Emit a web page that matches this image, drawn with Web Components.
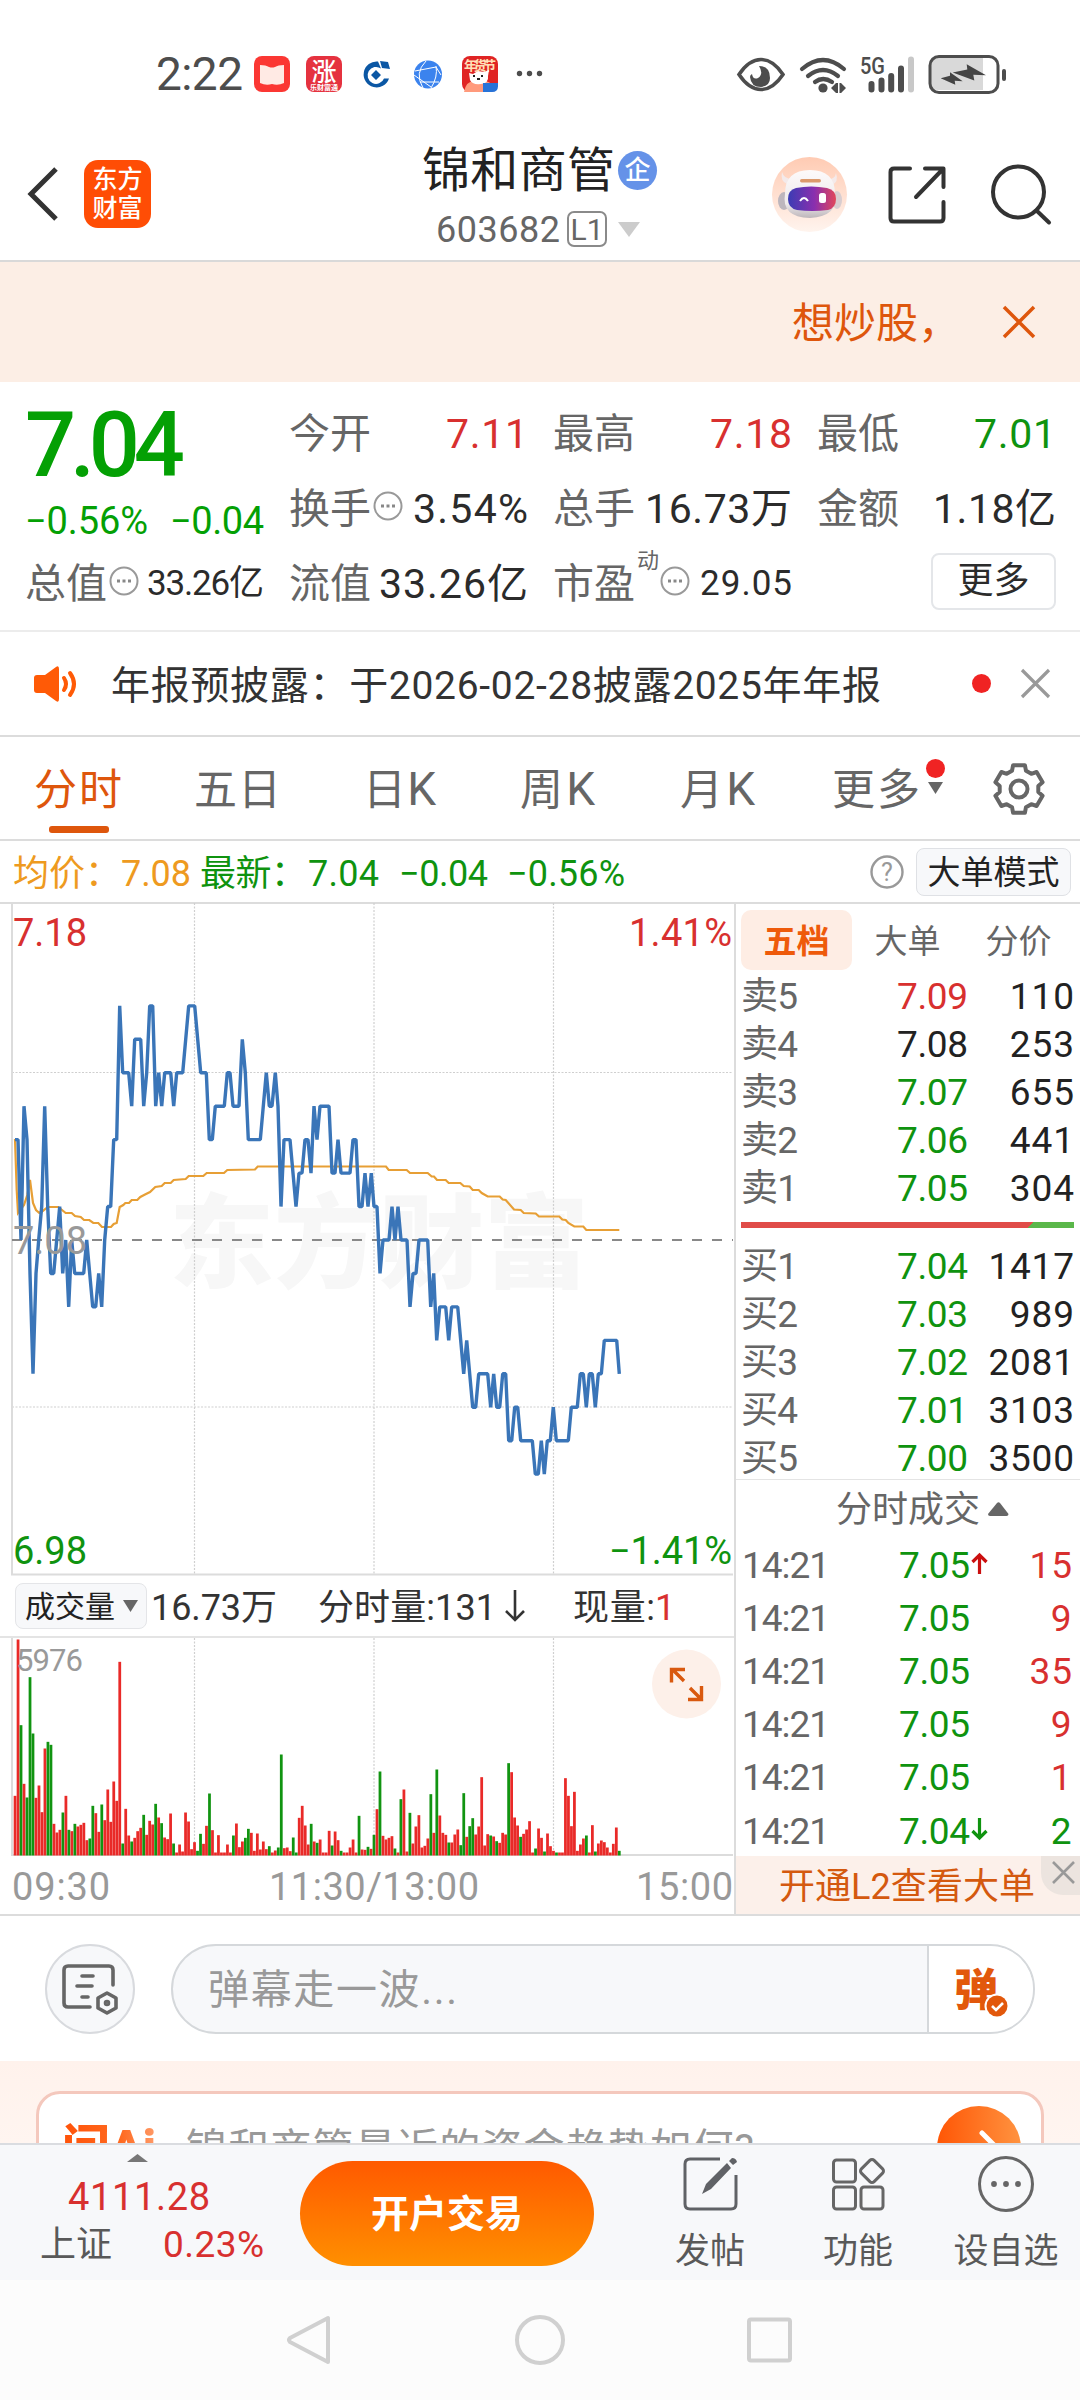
<!DOCTYPE html>
<html lang="zh-CN">
<head>
<meta charset="utf-8">
<title>锦和商管 603682</title>
<style>
    html, body { margin: 0; padding: 0; }
    body {
        width: 1080px;
        height: 2400px;
        overflow: hidden;
        background: #fff;
        color: #2b2b2b;
        font-family: Roboto, "Noto Sans CJK SC", sans-serif;
        --up: #d8302f;
        --down: #0f930f;
        --orange: #de560c;
        --grey: #666;
        --line: #dcdcdc;
    }
</style>
</head>
<body>
<stock-page>
    <status-bar></status-bar>
    <stock-header></stock-header>
    <promo-strip><fit-text w="168">想炒股，</fit-text></promo-strip>
    <quote-panel></quote-panel>
    <notice-bar><fit-text w="770">年报预披露：于2026-02-28披露2025年年报</fit-text></notice-bar>
    <period-tabs></period-tabs>
    <chart-legend></chart-legend>
    <trade-board></trade-board>
    <comment-bar></comment-bar>
    <ask-card></ask-card>
    <bottom-bar></bottom-bar>
    <system-nav></system-nav>
</stock-page>

<script>
// Registers an element whose shadow root is stamped from a template
function define(name, css, markup) {
    const tpl = document.createElement("template");
    tpl.innerHTML = `<style>svg { display: block; flex: none; overflow: visible; } ${css}</style>${markup}`;
    customElements.define(name, class extends HTMLElement {
        constructor() {
            super();
            this.attachShadow({ mode: "open" }).append(tpl.content.cloneNode(true));
        }
    });
}

define("stock-page", `
    :host { display: flex; flex-direction: column; width: 1080px; height: 2400px; overflow: hidden; }
    ::slotted(*) { flex: none; }
`, `<slot></slot>`);

// ---------- status bar ----------
define("status-bar", `
    :host { display: flex; align-items: center; height: 145px; box-sizing: border-box; padding: 2px 73px 0 156px; color: #4d4d4d; }
    .time { font-size: 46px; line-height: 54px; --drop: 0; }
    .apps { margin-left: 11px; }
    .sys { margin-left: auto; }
`, `
    <fit-text class="time" w="87">2:22</fit-text>
    <svg class="apps" width="290" height="36" viewBox="0 0 290 36">
        <rect width="36" height="36" rx="8" fill="#fb3733"/>
        <path d="M6 9q6 0 9 2 3 1 6 0 3-2 9-2v18q-6 3-12 1-6 2-12-1z" fill="#ffeae4"/>
        <rect x="52" width="36" height="36" rx="8" fill="#e5323f"/>
        <text x="70" y="25" font-size="25" font-weight="500" fill="#fff" text-anchor="middle">涨</text>
        <text x="70" y="34" font-size="7" font-weight="700" fill="#fff" text-anchor="middle">乐财富通</text>
        <path d="M124 5.500a13 13 0 1 0 11 17l-5 0a8.500 8.500 0 1 1-3-10z" fill="#0b57a4"/>
        <path d="M126 5l8 1 2 7-8-1zM122 14l5 5-5 5-5-5z" fill="#0b57a4"/>
        <circle cx="174" cy="18.500" r="14" fill="#3b83ee"/>
        <path d="M172 5q-12 12-3 27M161 15l21-4 5 8M166 26l19 0M182 10q2 11-5 22M160 19l17 12" fill="none" stroke="#fff" stroke-width="1"/>
        <rect x="208" width="36" height="36" rx="8" fill="#e02424"/>
        <text x="226" y="14" font-size="13" font-weight="700" fill="#ffe0b8" text-anchor="middle" textLength="32">年货节</text>
        <path d="M210 36q2-12 12-11l10 0q8 2 7 11z" fill="#ff9a7c"/>
        <path d="M215 17l4 1 5-3 6 1 5-2-1 6q1 7-7 8-9 1-11-4z" fill="#fff"/>
        <path d="M219 20h2M227 20h2M223 23h3" stroke="#222" stroke-width="2"/>
        <path d="M229 27h15v3q0 6-6 6h-9z" fill="#2773d8"/>
        <circle cx="265.500" cy="17.500" r="2.700" fill="#4d4d4d"/>
        <circle cx="275.500" cy="17.500" r="2.700" fill="#4d4d4d"/>
        <circle cx="285.500" cy="17.500" r="2.700" fill="#4d4d4d"/>
    </svg>
    <svg class="sys" width="270" height="40" viewBox="0 0 270 40">
        <path d="M2 20.500Q12 5.500 24 5.500T46 20.500Q36 35.500 24 35.500T2 20.500z" fill="none" stroke="#4d4d4d" stroke-width="3.600"/>
        <path d="M22 12q11 0 11 12 0 8-9 9-10 0-11-10 0-2 2-3 1 6 6 4 6-4 1-12z" fill="#4d4d4d"/>
        <g fill="none" stroke="#4d4d4d" stroke-width="4.200" stroke-linecap="round">
            <path d="M65 15q21-18 42 0M71 22q15-12 30 0M78 28q8-6 17 0"/>
        </g>
        <circle cx="86" cy="34" r="4.600" fill="#4d4d4d"/>
        <path d="M94 34l5-5v10zM109 34l-5 5v-10zM99 29h2v10h-2zM102.500 29h2v10h-2z" fill="#4d4d4d"/>
        <text x="123" y="20" font-size="23" font-weight="500" fill="#4d4d4d" textLength="25" lengthAdjust="spacingAndGlyphs">5G</text>
        <g stroke="#4d4d4d" stroke-width="6" stroke-linecap="round">
            <path d="M134.500 30v5.500M144.500 26.500v9M154.200 22v13.500M164 14.500v21"/>
            <path d="M174 5.500v30" stroke="#c8c8c8"/>
        </g>
        <path d="M201 4h45v32h-45q-9 0-9-9V13q0-9 9-9z" fill="#d9d9d9"/>
        <rect x="193" y="2.500" width="68" height="36" rx="9" fill="none" stroke="#4d4d4d" stroke-width="3"/>
        <rect x="265" y="15" width="4" height="12" rx="2" fill="#4d4d4d"/>
        <path d="M215.700 18.500L230.300 15.500 229.700 10.200 249 21.200 236.300 20.800 237.300 26.500zM203.700 24.200L213 21.800V18.300L225.700 27.200 217.700 26.800 218.300 30.700z" fill="#444"/>
    </svg>
`);

// ---------- title bar ----------
define("stock-header", `
    :host { display: flex; align-items: flex-start; height: 117px; box-sizing: border-box; border-bottom: 2px solid #d9d9d9; }
    .back { margin: 22px 0 0 27px; }
    .logo {
        width: 67px; height: 68px; margin: 15px 0 0 26px; border-radius: 14px; background: #ff4d05; color: #fff;
        font-size: 25px; font-weight: 500; line-height: 29px; text-align: center; box-sizing: border-box; padding-top: 5px;
    }
    .title { margin-left: 271px; width: 241px; }
    .name { display: flex; align-items: center; height: 50px; font-size: 48px; line-height: 50px; color: #222; --drop: 1px; }
    .tag {
        width: 39px; height: 39px; margin-left: 3px; border-radius: 50%; background: #6592e8; color: #fff;
        font-size: 26px; font-weight: 500; line-height: 38px; text-align: center;
    }
    .code { display: flex; align-items: center; height: 38px; margin: 15px 0 0 14px; font-size: 36px; line-height: 38px; color: var(--grey); --drop: 1px; }
    .level {
        width: 36px; height: 32px; margin: 0 11px 0 7px; border: 2px solid #8a8a8a; border-radius: 7px;
        font-size: 30px; line-height: 34px; text-align: center;
    }
    .robot { margin: 12px 0 0 109px; }
    .share { margin: 21px 0 0 41px; }
    .find { margin: 19px 0 0 45px; }
`, `
    <svg class="back" width="31" height="54" viewBox="0 0 31 54"><path d="M29 2L4 27l25 25" fill="none" stroke="#333" stroke-width="5"/></svg>
    <div class="logo">东方<br>财富</div>
    <div class="title">
        <div class="name"><fit-text w="193">锦和商管</fit-text><span class="tag">企</span></div>
        <div class="code"><fit-text w="124">603682</fit-text><span class="level">L1</span>
            <svg width="22" height="15" viewBox="0 0 22 15"><path d="M0 0h22L11 15z" fill="#ccc"/></svg></div>
    </div>
    <svg class="robot" width="75" height="75" viewBox="0 0 75 75">
        <defs>
            <linearGradient id="sky" x2="0" y2="1"><stop stop-color="#ffcbb3"/><stop offset="1" stop-color="#fff4ee"/></linearGradient>
            <linearGradient id="shell" x2="0" y2="1"><stop stop-color="#fdfafa"/><stop offset=".7" stop-color="#eeeaec"/><stop offset="1" stop-color="#bdb6ba"/></linearGradient>
            <linearGradient id="visor"><stop stop-color="#3b3cb4"/><stop offset=".55" stop-color="#8a2fae"/><stop offset="1" stop-color="#e2475a"/></linearGradient>
        </defs>
        <circle cx="37.500" cy="37.500" r="37.500" fill="url(#sky)"/>
        <path d="M10 15q-2 9 5 12l5-5q-8 0-10-7zM64 16q3 9-4 12l-5-6q8 1 9-6z" fill="#f4eaea"/>
        <ellipse cx="12" cy="44" rx="6" ry="9" fill="#bdb6bd"/>
        <ellipse cx="65" cy="43" rx="5" ry="9" fill="#d8cdd0"/>
        <path d="M13 37q0-24 25-24t25 24q4 22-25 24-29-1-25-24z" fill="url(#shell)"/>
        <rect x="28" y="22" width="21" height="3.500" rx="1.700" fill="#dc9a6c"/>
        <path d="M24 31q15-3 31 0 9 2 9 11t-8 11q-16 2-31 0-9-2-9-11t8-11z" fill="url(#visor)"/>
        <path d="M28 44q4-6 8 0" fill="none" stroke="#fff" stroke-width="2"/>
        <rect x="47" y="36" width="7" height="10" rx="2.500" fill="#fff"/>
    </svg>
    <svg class="share" width="58" height="58" viewBox="0 0 58 58" fill="none" stroke="#333" stroke-width="4" stroke-linecap="round" stroke-linejoin="round">
        <path d="M22 2.500H6Q2.500 2.500 2.500 6v46q0 3.500 3.500 3.500h46q3.500 0 3.500-3.500V36M37 2.500h18.500V21M54 4L28 31"/>
    </svg>
    <svg class="find" width="60" height="60" viewBox="0 0 60 60" fill="none" stroke="#333" stroke-width="4" stroke-linecap="round">
        <circle cx="27.500" cy="28" r="25.500"/><path d="M45.500 46.500L58 58.500"/>
    </svg>
`);

define("promo-strip", `
    :host {
        display: flex; align-items: center; justify-content: flex-end; height: 120px; box-sizing: border-box; padding-right: 45px;
        background: #fceee5; color: var(--orange); font-size: 42px; line-height: 60px;
    }
    svg { margin-left: 43px; }
`, `
    <slot></slot>
    <svg width="32" height="32" viewBox="0 0 32 32"><path d="M1 1l30 30M31 1L1 31" stroke="#de560c" stroke-width="3.500"/></svg>
`);

// ---------- quote ----------
define("info-dot", `:host { display: block; }`, `
    <svg width="30" height="30" viewBox="0 0 30 30">
        <circle cx="15" cy="15" r="13.500" fill="none" stroke="#999" stroke-width="2"/>
        <path d="M8 15h3M13.500 15h3M19 15h3" stroke="#888" stroke-width="3"/>
    </svg>
`);

define("quote-item", `
    :host { display: flex; align-items: center; height: 75px; font-size: 41px; line-height: 50px; color: #2b2b2b; }
    .label { display: flex; align-items: center; color: var(--grey); }
    .value { margin-left: auto; display: flex; }
`, `<div class="label"><slot name="label"></slot></div><div class="value"><slot></slot></div>`);

define("quote-panel", `
    :host {
        display: grid; grid-template-columns: repeat(4, 239px); column-gap: 25px; align-content: start;
        height: 250px; box-sizing: border-box; padding: 12px 24px 0 25px; border-bottom: 2px solid #ececec;
    }
    .last { grid-row: span 2; height: 150px; color: #04a004; }
    .price { display: block; font-size: 90px; font-weight: 500; line-height: 98px; --drop: 3px; }
    .change { display: flex; justify-content: space-between; font-size: 38px; line-height: 52px; --drop: 3px; }
    .up { color: var(--up); }
    .down { color: var(--down); }
    .small { font-size: 35px; }
    info-dot { margin-left: 2px; margin-top: -2px; }
    .sup { font-size: 22px; line-height: 22px; align-self: flex-start; margin: -7px -1px 0 2px; }
    .more {
        justify-self: end; align-self: center; width: 121px; height: 53px; border: 2px solid #e4e6e9; border-radius: 8px;
        font-size: 36px; line-height: 53px; text-align: center;
    }
`, `
    <div class="last">
        <fit-text class="price" w="160">7.04</fit-text>
        <div class="change"><fit-text w="123">−0.56%</fit-text><fit-text w="94">−0.04</fit-text></div>
    </div>
    <quote-item><fit-text slot="label" w="82">今开</fit-text><fit-text class="up" w="82">7.11</fit-text></quote-item>
    <quote-item><fit-text slot="label" w="82">最高</fit-text><fit-text class="up" w="82">7.18</fit-text></quote-item>
    <quote-item><fit-text slot="label" w="82">最低</fit-text><fit-text class="down" w="82">7.01</fit-text></quote-item>
    <quote-item><fit-text slot="label" w="82">换手</fit-text><info-dot slot="label"></info-dot><fit-text w="115">3.54%</fit-text></quote-item>
    <quote-item><fit-text slot="label" w="82">总手</fit-text><fit-text w="147">16.73万</fit-text></quote-item>
    <quote-item><fit-text slot="label" w="82">金额</fit-text><fit-text w="123">1.18亿</fit-text></quote-item>
    <quote-item><fit-text slot="label" w="82">总值</fit-text><info-dot slot="label"></info-dot><fit-text class="small" w="117">33.26亿</fit-text></quote-item>
    <quote-item><fit-text slot="label" w="82">流值</fit-text><fit-text w="149">33.26亿</fit-text></quote-item>
    <quote-item><fit-text slot="label" w="82">市盈</fit-text><span slot="label" class="sup">动</span><info-dot slot="label"></info-dot><fit-text class="small" w="92">29.05</fit-text></quote-item>
    <div class="more">更多</div>
`);

define("notice-bar", `
    :host { display: flex; align-items: center; height: 105px; box-sizing: border-box; padding: 0 30px 0 34px; border-bottom: 2px solid var(--line); font-size: 39px; line-height: 50px; color: #333; }
    slot { display: block; margin-left: 32px; }
    .dot { width: 19px; height: 19px; border-radius: 50%; background: #f02323; margin: 0 30px 0 auto; }
`, `
    <svg width="45" height="36" viewBox="0 0 45 36">
        <path d="M3 9h8L22 1q3-2 3 2v30q0 4-3 2L11 27H3q-3 0-3-3V12q0-3 3-3z" fill="#ff5a06"/>
        <path d="M30 12q4 6 0 12M36 7q8 11 0 22" fill="none" stroke="#ff5a06" stroke-width="4" stroke-linecap="round"/>
    </svg>
    <slot></slot>
    <span class="dot"></span>
    <svg width="29" height="29" viewBox="0 0 29 29"><path d="M1 1l27 27M28 1L1 28" stroke="#999" stroke-width="3.200"/></svg>
`);

// ---------- chart tabs ----------
const gear = Array.from({ length: 6 }, (_, k) =>
    [[-14, 24.5], [14, 24.5], [21, 19.5], [39, 19.5]].map(([da, r]) => {
        const a = (k * 60 - 90 + da) * Math.PI / 180;
        return (26 + r * Math.cos(a)).toFixed(1) + " " + (26 + r * Math.sin(a)).toFixed(1);
    }).join("L")).join("L");

define("period-tabs", `
    :host { display: flex; height: 104px; box-sizing: border-box; border-bottom: 2px solid var(--line); font-size: 43px; line-height: 105px; color: var(--grey); padding-left: 34px; --drop: 1px; }
    .tab { height: 102px; }
    .tab span { font-size: 46px; line-height: 1; }
    .on { color: var(--orange); position: relative; }
    .on::after { content: ""; position: absolute; left: 15px; bottom: 6px; width: 60px; height: 7px; border-radius: 3px; background: var(--orange); }
    .mark { display: flex; flex-direction: column; align-items: center; gap: 4px; margin: 22px 0 0 6px; width: 19px; }
    .dot { width: 19px; height: 19px; border-radius: 50%; background: #f02323; }
    .gear { margin: 26px 0 0 48px; }
`, `
    <div class="tab on"><fit-text w="88">分时</fit-text></div>
    <fit-text class="tab" style="margin-left:72px" w="87">五日</fit-text>
    <fit-text class="tab" style="margin-left:82px" w="73">日<span>K</span></fit-text>
    <fit-text class="tab" style="margin-left:84px" w="75">周<span>K</span></fit-text>
    <fit-text class="tab" style="margin-left:85px" w="75">月<span>K</span></fit-text>
    <fit-text class="tab" style="margin-left:77px" w="88">更多</fit-text>
    <div class="mark"><span class="dot"></span><svg width="15" height="12" viewBox="0 0 15 12"><path d="M0 0h15L7.500 12z" fill="#666"/></svg></div>
    <svg class="gear" width="52" height="52" viewBox="0 0 52 52" fill="none" stroke="#666" stroke-width="4" stroke-linejoin="round">
        <path d="M${gear}z"/><circle cx="26" cy="26" r="8.500"/>
    </svg>
`);

define("chart-legend", `
    :host { display: flex; align-items: center; height: 63px; box-sizing: border-box; border-bottom: 2px solid var(--line); padding: 0 9px 0 13px; font-size: 36px; line-height: 50px; color: var(--down); }
    .avg { color: #ee9a20; }
    svg { margin-left: auto; }
    .mode { width: 153px; height: 46px; margin-left: 12px; border: 1.500px solid #dfe1e5; border-radius: 8px; background: #f7f8fa; color: #222; font-size: 33px; line-height: 48px; text-align: center; }
`, `
    <fit-text class="avg" w="108">均价：</fit-text><fit-text class="avg" w="70">7.08</fit-text>
    <fit-text style="margin-left:9px" w="107">最新：</fit-text><fit-text style="margin-left:1px" w="71">7.04</fit-text>
    <fit-text style="margin-left:20px" w="89">−0.04</fit-text><fit-text style="margin-left:19px" w="118">−0.56%</fit-text>
    <svg width="34" height="34" viewBox="0 0 34 34">
        <circle cx="17" cy="17" r="15.500" fill="none" stroke="#999" stroke-width="2.400"/>
        <text x="17" y="26" font-size="25" fill="#999" text-anchor="middle">?</text>
    </svg>
    <div class="mode">大单模式</div>
`);

// ---------- minute chart ----------
// x in pixels, then ticks of 0.01 away from the previous close
const PRICE = `15 3,18 3,21 0,24 4,27 3,30 -1,33 -4,36 -1,38.700 0,41.700 1,44.700 4,47.700 1,50.700 -1,53.700 -1,56.700 0,59.700 1,62.700 -1,65.700 0,68.700 -2,71.700 0,74.700 -1,83.700 -1,86.700 0,89.700 -1,92.700 -2,95.700 -2,98.700 -1,101.700 -2,104.700 0,107.700 1,110.700 1,113.700 3,116.700 3,119.700 7,122.700 5,128.700 5,131.700 4,134.700 6,140.700 6,143.700 4,146.700 5,149.700 7,152.700 7,155.700 4,158.700 5,161.700 4,164.700 5,170.700 5,173.700 4,176.700 5,182.700 5,185.700 6,188.700 7,194.700 7,197.700 6,200.700 5,206.300 5,209.300 3,212.300 3,215.300 4,224.300 4,227.300 5,230 5,233 4,239 4,242.300 6,245.300 5,248.300 3,260.300 3,263.300 4,266.300 5,269.300 4,272 4,275.300 5,278 4,281 1,284 3,290 3,293 2,296 1,299 2,302 2,305 3,308 3,311 2,314 4,317 3,320 4,329 4,332 2,335 2,338 3,341 2,350 2,353 3,356 3,359 1,362 1,365 2,368 1,371.300 2,374 1,377 1,380 -1,383 0,389 0,392 1,395 0,398 1,401 0,407 0,410 -2,413 -1,416 -1,419 0,427.700 0,430.700 -2,433.700 -1,436.700 -3,439.700 -2,445.700 -2,448.700 -3,451.700 -2,457.700 -2,460.700 -3,463.700 -4,466.700 -3,469.700 -4,472.700 -5,475.700 -5,478.700 -4,487.700 -4,490.700 -5,493.700 -4,496.700 -5,499.700 -5,502.700 -4,505.700 -4,508.700 -6,511.700 -6,514.700 -5,517.700 -5,520.700 -6,532.300 -6,535.300 -7,538.300 -7,541.300 -6,544.300 -7,547.300 -6,550.300 -6,553.300 -5,556.300 -6,568.300 -6,571.300 -5,577.300 -5,580.300 -4,583.300 -4,586.300 -5,589.300 -4,592.300 -4,595.300 -5,598.300 -4,601.300 -4,604.300 -3,616.700 -3,619.300 -4`
    .split(",").map(p => p.split(" ").map(Number));

const AVERAGE = "15 236,16.700 287,18 310,24 302,27.300 292,30 277,33 300,36 307,39.300 310,42.700 308,47.700 304,58.300 304,65.700 310,71.700 310,75 313,80.700 314,84 317,89.300 317,93.300 320,98.300 320,102 324,111 324,113.700 321,116.700 320,119.700 304,123.300 302,125.300 300,129 300,131.700 297,137.300 297,140.300 294,146 291,150 289,155.300 284,161.700 283,164.700 280,170.700 280,173.700 277,185.700 276,188.700 273,203.300 273,206.700 270,224 270,227.300 267,255 266.500,257.700 263.500,386 263.500,388.700 267,406.700 267,410 270,427.700 270,431.700 273.500,434 273.500,437 277,445.700 277,448.700 280,460.300 280,463.700 283,469.700 283.500,472.700 287,478.700 287,481.700 290,487.700 293.500,499.700 293.500,502.700 296.500,505.700 297,514 306.500,520.700 307,523.700 310,535.700 310.500,539 313.500,559.300 313.500,562.300 316.500,565.700 317,568.300 320,574.300 323.500,583.300 323.500,586.300 327,619.300 327";

define("minute-chart", `
    :host { display: block; height: 672px; }
    text { font-size: 38px; }
`, `
    <svg width="734" height="672" viewBox="0 0 734 672">
        <text x="169" y="377" style="font-size:102px" font-weight="900" fill="#f7f7f7" textLength="420" lengthAdjust="spacingAndGlyphs">东方财富</text>
        <g fill="none" stroke="#cfcfcf" stroke-width="1.200" stroke-dasharray="2 1.500">
            <path d="M194.500 0v671M374 0v671M553.500 0v671M12 169.500h721M12 504h721"/>
        </g>
        <path d="M12 0v671.500h721" fill="none" stroke="#dcdcdc" stroke-width="2"/>
        <path d="M12 337h721" stroke="#888" stroke-width="2" stroke-dasharray="10 10"/>
        <polyline points="${AVERAGE}" fill="none" stroke="#e79f35" stroke-width="2.200"/>
        <polyline points="${PRICE.map(([x, t]) => x + " " + (337 - 33.45 * t)).join(",")}" fill="none" stroke="#3a75b8" stroke-width="3.400" stroke-linejoin="bevel"/>
        <g fill="#d8302f"><text x="13" y="43" textLength="74">7.18</text><text x="629" y="43" textLength="103">1.41%</text></g>
        <text x="13" y="351" fill="#999" textLength="74">7.08</text>
        <g fill="#0f930f"><text x="13" y="661" textLength="74">6.98</text><text x="609" y="661" textLength="123">−1.41%</text></g>
    </svg>
`);

define("volume-head", `
    :host { display: flex; align-items: center; height: 63px; box-sizing: border-box; border-bottom: 2px solid #e4e4e4; padding-left: 15px; font-size: 36px; line-height: 50px; color: #333; }
    .pick { display: flex; align-items: center; width: 130px; height: 44px; border: 1.500px solid #e4e5e8; border-radius: 8px; background: #f7f8fa; color: #222; font-size: 30px; line-height: 44px; --drop: 1px; }
    .pick fit-text { margin: 0 8px 0 9px; }
    .now { color: var(--up); }
`, `
    <span class="pick"><fit-text w="90">成交量</fit-text><svg width="15" height="12" viewBox="0 0 15 12"><path d="M0 0h15L7.500 12z" fill="#666"/></svg></span>
    <fit-text style="margin-left:4px" w="126">16.73万</fit-text>
    <fit-text style="margin-left:41px" w="178">分时量:131</fit-text>
    <svg style="margin-left:9px" width="20" height="32" viewBox="0 0 20 32"><path d="M10 0v30M1 21l9 9 9-9" fill="none" stroke="#333" stroke-width="2.600"/></svg>
    <fit-text style="margin-left:48px" w="82">现量:</fit-text><fit-text class="now" w="18">1</fit-text>
`);

// One bar a minute: r rise, g fall, then the y of its top (the base line is at 885)
const VOLUME = `r706 r237 g494 r670 g711 g350 g519 r712 r675 r755 r564 g544 g553 r790 r816 r808 g756 r706 g808 r812
    g790 r798 r793 r787 r839 g834 g736 r758 r814 g732 r779 r687 r784 r663 r721 r304 g849 r745 r825 g843
    r832 r812 r802 g763 r823 r781 r792 g730 r771 g788 r831 r836 r759 g849 r876 r852 r873 r756 r783 r866
    r845 g871 g820 r850 r796 g699 r809 r876 r824 r876 r876 r852 r876 g825 r789 r860 r843 g832 g805 r817
    r871 r819 r867 r843 r866 g857 r876 r870 g861 g582 r863 r861 r872 g831 g876 r772 r736 r795 r852 g790
    r843 g847 r837 r876 r876 r811 g855 r813 r839 g871 r876 r876 r861 r837 r876 g766 r867 r868 g859 r865
    g823 r746 g633 r826 r837 r832 r827 g864 r876 g716 r687 r873 g757 r849 r798 r764 r861 r856 r834 g701
    r817 g627 r765 r817 r823 g846 r846 r822 r807 g854 g698 r829 g797 g773 r822 r798 r650 r855 r821 g825
    r828 g842 r847 r817 r822 g608 r635 r771 r795 g829 r820 r807 r782 r876 g864 r804 r832 g873 r819 r857
    r871 g876 r876 r876 r653 r706 r797 r694 r871 r852 r834 g825 r876 r794 g873 r849 r840 r845 r861 r876
    r850 r801 g871`.trim().split(/\s+/);

define("volume-chart", `
    :host { display: block; height: 276px; }
    text { fill: #999; font-size: 38px; }
`, `
    <svg width="734" height="276" viewBox="0 0 734 276">
        <path d="M194.500 0v218M374 0v218M553.500 0v218" stroke="#cfcfcf" stroke-width="1.200" stroke-dasharray="2 1.500"/>
        <path d="M12 0v217h721" fill="none" stroke="#dcdcdc" stroke-width="2"/>
        <svg y="0.500" width="734" height="217" viewBox="0 234 2202 651">
            ${VOLUME.map((v, i) => `<rect x="${(41 + 8.974 * i).toFixed(1)}" y="${v.slice(1)}" width="8.300" height="${885 - v.slice(1)}" fill="${v[0] === "r" ? "#e92a28" : "#119411"}"/>`).join("")}
        </svg>
        <text x="16" y="33" style="font-size:31px" textLength="67">5976</text>
        <text x="12" y="262" textLength="98">09:30</text>
        <text x="269" y="262" textLength="210">11:30/13:00</text>
        <text x="636" y="262" textLength="97">15:00</text>
        <circle cx="686.500" cy="46" r="34.500" fill="#fdf0e9"/>
        <path d="M684 43L672 31M671.500 44.500V31.500h13.500M690 50l12 12M701.500 48v13.500H688" fill="none" stroke="#d9590f" stroke-width="3.400"/>
    </svg>
`);

// ---------- order book and ticks ----------
const BOOK = [
    ["卖5", "7.09", "110", "up"], ["卖4", "7.08", "253", ""], ["卖3", "7.07", "655", "down"], ["卖2", "7.06", "441", "down"], ["卖1", "7.05", "304", "down"],
    ["买1", "7.04", "1417", "down"], ["买2", "7.03", "989", "down"], ["买3", "7.02", "2081", "down"], ["买4", "7.01", "3103", "down"], ["买5", "7.00", "3500", "down"]
];
const bookRow = ([side, price, lots, dir]) =>
    `<div class="row"><fit-text class="side" w="57">${side}</fit-text><fit-text class="${dir}" w="71">${price}</fit-text><fit-text w="${lots.length * 21.4}">${lots}</fit-text></div>`;

define("order-book", `
    :host { display: block; height: 577px; box-sizing: border-box; border-bottom: 1.500px solid #e4e4e4; font-size: 37px; color: #222; }
    .tabs { display: grid; grid-template-columns: repeat(3, 111px); padding: 7px 0 0 5px; font-size: 33px; line-height: 63px; height: 61px; text-align: center; color: var(--grey); }
    .on { background: #feede4; border-radius: 10px; color: #ee5a0a; font-weight: 700; height: 60px; }
    .row { display: grid; grid-template-columns: 58px 176px 106px; padding-left: 5px; height: 48px; line-height: 48px; }
    .row > :nth-child(n + 2) { justify-self: end; margin-right: 7px; }
    .side { color: var(--grey); }
    .up { color: var(--up); }
    .down { color: var(--down); }
    .ratio { height: 6px; margin: 11px 6px 13px 5px; background: linear-gradient(135deg, #e04c48 86.300%, #5ab74a 86.400%); }
`, `
    <div class="tabs"><span class="on">五档</span><span>大单</span><span>分价</span></div>
    ${BOOK.slice(0, 5).map(bookRow).join("")}
    <div class="ratio"></div>
    ${BOOK.slice(5).map(bookRow).join("")}
`);

const TICKS = [
    ["7.05", "15", "up", "M8.500 21V2M1.500 9l7-7 7 7"], ["7.05", "9", "up"], ["7.05", "35", "up"],
    ["7.05", "9", "up"], ["7.05", "1", "up"], ["7.04", "2", "down", "M8.500 0v20M1.500 13l7 7 7-7"]
];

define("tick-list", `
    :host { display: block; height: 376px; font-size: 37px; color: var(--down); }
    .head { display: flex; align-items: center; justify-content: center; gap: 8px; height: 57px; font-size: 36px; line-height: 57px; color: var(--grey); padding-left: 29px; }
    .row { display: flex; align-items: center; height: 53.100px; line-height: 53px; padding: 0 8px 0 6px; }
    .time { color: var(--grey); }
    .price { margin-left: 69px; }
    .row svg { margin-left: 1px; }
    .lots { margin-left: auto; }
    .up { color: var(--up); }
`, `
    <div class="head"><fit-text w="144">分时成交</fit-text><svg width="21" height="14" viewBox="0 0 21 14"><path d="M9 1q1.500-1.500 3 0l8.500 11q0 2-2 2H2q-2 0-2-2z" fill="#666"/></svg></div>
    ${TICKS.map(([price, lots, dir, arrow]) => `
        <div class="row"><fit-text class="time" w="88">14:21</fit-text><fit-text class="price" w="71">${price}</fit-text>
            ${arrow ? `<svg width="17" height="22" viewBox="0 0 17 22"><path d="${arrow}" fill="none" stroke="${dir === "up" ? "#cb0f0f" : "#0f930f"}" stroke-width="3.200"/></svg>` : ""}
            <fit-text class="lots ${dir}" w="${lots.length * 21.2}">${lots}</fit-text></div>`).join("")}
`);

define("level-two", `
    :host { display: flex; height: 58px; background: #fcf0ea; color: #d4590f; font-size: 36px; line-height: 58px; }
    fit-text { margin-left: 43px; }
    .close { width: 39px; height: 39px; margin-left: auto; border-radius: 0 0 0 22px; background: #ece4df; display: grid; place-items: center; }
`, `
    <fit-text w="256">开通L2查看大单</fit-text>
    <span class="close"><svg width="21" height="21" viewBox="0 0 21 21" style="margin:-6px 0 0 6px"><path d="M0 0l21 21M21 0L0 21" stroke="#999" stroke-width="2.600"/></svg></span>
`);

define("trade-board", `
    :host { display: grid; grid-template-columns: 734px 346px; height: 1013px; box-sizing: border-box; border-bottom: 2px solid var(--line); margin-top: -1px; }
    .side { border-left: 2px solid var(--line); box-sizing: border-box; }
`, `
    <div><minute-chart></minute-chart><volume-head></volume-head><volume-chart></volume-chart></div>
    <div class="side"><order-book></order-book><tick-list></tick-list><level-two></level-two></div>
`);

// ---------- comment box ----------
define("comment-bar", `
    :host { display: flex; align-items: center; height: 145px; box-sizing: border-box; padding: 1px 45px 0; gap: 36px; }
    .set { width: 86px; height: 86px; border: 2px solid #d8dade; border-radius: 50%; background: #f7f8fa; display: grid; place-items: center; }
    .field { flex: 1; display: flex; height: 86px; border: 2px solid #d5d8db; border-radius: 45px; overflow: hidden; background: #f7f8fa; font-size: 41px; line-height: 84px; color: #999; }
    fit-text { margin-left: 35px; }
    .send { margin-left: auto; width: 104px; border-left: 2px solid #d5d8db; background: #fff; }
`, `
    <span class="set"><svg width="56" height="50" viewBox="0 0 56 50" fill="none" stroke="#666" stroke-width="3.600" stroke-linecap="round">
        <path d="M51 21V6q0-4-4-4H6Q2 2 2 6v33q0 4 4 4h22M20 12h11M15 22h15M20 33h6"/>
        <path d="M45 29l9 5v10l-9 5-9-5V34z" stroke-linejoin="round"/><circle cx="45" cy="39" r="1.500"/>
    </svg></span>
    <div class="field">
        <fit-text w="249">弹幕走一波...</fit-text>
        <div class="send"><svg width="104" height="86" viewBox="0 0 104 86">
            <text x="25" y="60" font-size="44" font-weight="900" fill="#e2580c">弹</text>
            <circle cx="68" cy="60" r="12.500" fill="#fff"/><circle cx="68" cy="60" r="10.500" fill="#e2580c"/>
            <path d="M63 60l4 4 7-7" fill="none" stroke="#fff" stroke-width="2.600"/>
        </svg></div>
    </div>
`);

define("ask-card", `
    :host { display: block; height: 82px; overflow: hidden; background: linear-gradient(#fff2ec, #fff5f0); }
    .card { display: flex; margin: 30px 36px 0; height: 110px; box-sizing: border-box; border: 3px solid #f4c8bd; border-radius: 24px; background: #fff; font-size: 41px; line-height: 110px; color: #999; --drop: 0; }
    .ask { margin-left: 23px; width: 98px; font-size: 48px; font-weight: 900; line-height: 108px; color: transparent; background: linear-gradient(90deg, #ff5208, #ff6a20 60%, #ffa070); -webkit-background-clip: text; }
    fit-text { margin-left: 26px; }
    svg { margin: 12px 20px 0 auto; }
`, `
    <div class="card">
        <span class="ask">问Ai</span>
        <fit-text w="568">锦和商管最近的资金趋势如何?</fit-text>
        <svg width="84" height="84" viewBox="0 0 84 84">
            <defs><linearGradient id="go" x2="1" y2="0"><stop stop-color="#ff5605"/><stop offset="1" stop-color="#ff9340"/></linearGradient></defs>
            <circle cx="42" cy="42" r="42" fill="url(#go)"/>
            <path d="M45 27l15 15-15 15" fill="none" stroke="#fff" stroke-width="5" stroke-linecap="round"/>
        </svg>
    </div>
`);

// ---------- bottom ----------
define("tool-button", `
    :host { display: flex; flex-direction: column; align-items: center; width: 110px; padding-top: 11px; color: #595959; font-size: 35px; line-height: 40px; }
    .text { margin-top: 20px; white-space: nowrap; }
`, `<slot name="icon"></slot><span class="text"><slot></slot></span>`);

define("bottom-bar", `
    :host { display: flex; height: 137px; box-sizing: border-box; border-top: 2px solid #dadce0; background: #f7f8fa; padding-left: 40px; }
    .index { width: 224px; margin-right: 2px; color: var(--up); font-size: 38px; }
    .index svg { margin: 9px 0 0 87px; }
    .points { display: block; margin: 8px 0 0 28px; line-height: 50px; }
    .line { display: flex; justify-content: space-between; font-size: 36px; line-height: 46px; }
    .name { color: #595959; }
    .open { width: 294px; height: 105px; margin: 16px 0 0 34px; border-radius: 53px; background: linear-gradient(#ff5a00, #ff8f00); color: #fff; font-size: 38px; font-weight: 700; line-height: 107px; text-align: center; }
`, `
    <div class="index">
        <svg width="21" height="8" viewBox="0 0 21 8"><path d="M0 8L10.500 0 21 8z" fill="#777"/></svg>
        <fit-text class="points" w="142">4111.28</fit-text>
        <div class="line"><fit-text class="name" w="72">上证</fit-text><fit-text w="101" style="font-size:37px">0.23%</fit-text></div>
    </div>
    <div class="open">开户交易</div>
    <tool-button style="margin-left:61px">
        <svg slot="icon" width="56" height="56" viewBox="0 0 56 56"><path d="M38 3H8Q3 3 3 8v40q0 5 5 5h41q5 0 5-5V19" fill="none" stroke="#606266" stroke-width="3"/><path d="M20 38l4-10L45 7l4 5-20 21zM47 5l3-3q4 0 5 4l-4 3z" fill="#606266"/></svg>
        发帖
    </tool-button>
    <tool-button style="margin-left:38px">
        <svg slot="icon" width="54" height="56" viewBox="0 0 54 56" fill="none" stroke="#666" stroke-width="3"><rect x="2.500" y="4" width="22" height="22" rx="3"/><rect x="2.500" y="31" width="22" height="22" rx="3"/><rect x="30" y="31" width="22" height="22" rx="3"/><rect x="32" y="6" width="18" height="18" rx="3" transform="rotate(45 41 15)"/></svg>
        功能
    </tool-button>
    <tool-button style="margin-left:38px">
        <svg slot="icon" width="56" height="56" viewBox="0 0 56 56"><circle cx="28" cy="28" r="26.500" fill="none" stroke="#666" stroke-width="3"/><circle cx="16" cy="28" r="2.900" fill="#666"/><circle cx="28" cy="28" r="2.900" fill="#666"/><circle cx="40" cy="28" r="2.900" fill="#666"/></svg>
        设自选
    </tool-button>
`);

define("system-nav", `
    :host { display: flex; align-items: center; justify-content: center; height: 120px; background: #fcfcfc; }
`, `
    <svg width="504" height="50" viewBox="0 0 504 50" fill="none" stroke="#d0d0d0" stroke-width="4">
        <path d="M40 3v44L2 27q-2-2 0-4z" stroke-linejoin="round"/>
        <circle cx="252" cy="25" r="23"/>
        <rect x="461" y="4.500" width="41" height="41" rx="2"/>
    </svg>
`);

// Text set to an exact width by spreading its letters; defined last, once the rest of the page is in place
customElements.define("fit-text", class extends HTMLElement {
    constructor() {
        super();
        this.attachShadow({ mode: "open" }).innerHTML = `
            <style>
                :host { display: inline-block; flex: none; white-space: nowrap; transform: translateY(var(--drop, 2px)); }
            </style>
            <span><slot></slot></span>`;
    }

    connectedCallback() {
        const width = Number(this.getAttribute("w"));
        const natural = this.shadowRoot.querySelector("span").getBoundingClientRect().width;
        const gaps = this.textContent.length - 1;
        this.style.width = width + "px";
        if (gaps > 0) this.style.letterSpacing = (width - natural) / gaps + "px";
    }
});
</script>
</body>
</html>
